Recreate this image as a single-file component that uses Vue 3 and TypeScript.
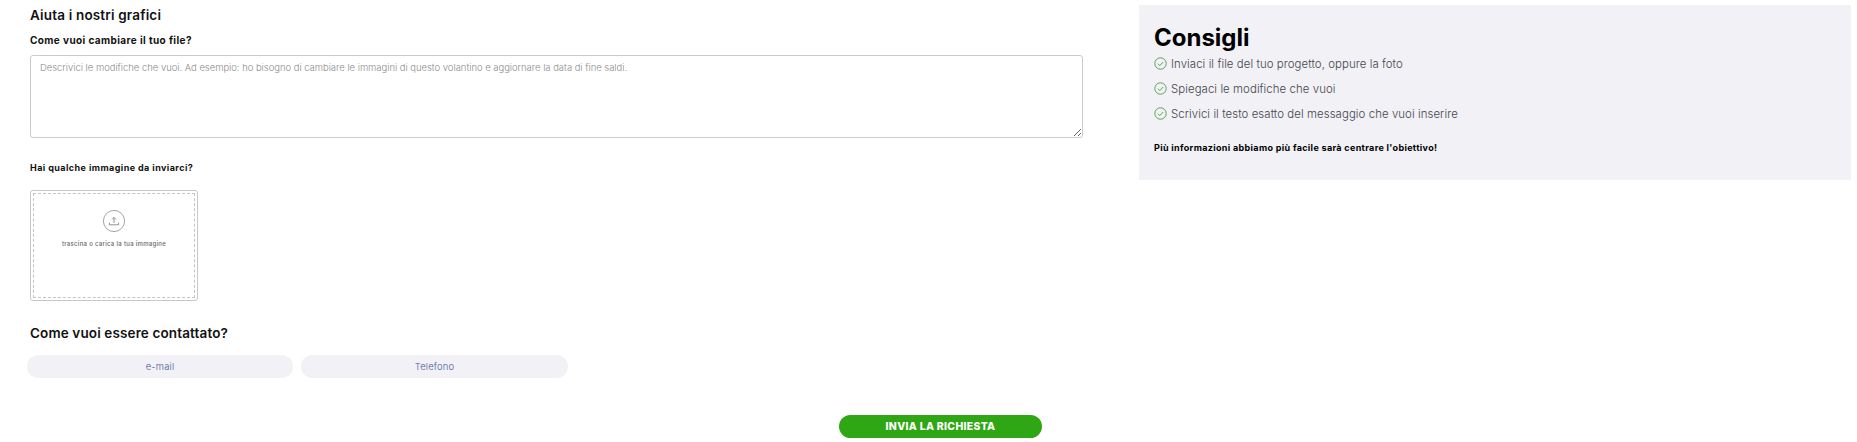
<template>
  <div class="page">
    <main class="form">
      <h2 class="title">Aiuta i nostri grafici</h2>
      <label class="label first-label" for="changes">Come vuoi cambiare il tuo file?</label>
      <textarea
        id="changes"
        class="area"
        placeholder="Descrivici le modifiche che vuoi. Ad esempio: ho bisogno di cambiare le immagini di questo volantino e aggiornare la data di fine saldi."
      ></textarea>

      <p class="label upload-label">Hai qualche immagine da inviarci?</p>
      <div class="drop">
        <div class="drop-inner">
          <svg class="upload-icon" width="24" height="24" viewBox="0 0 24 24" fill="none">
            <circle cx="12" cy="12" r="10.6" stroke="#8d8d8d" stroke-width="0.8" />
            <path d="M12 14V8.6M10 10.4l2-2 2 2" stroke="#777" stroke-width="0.8" />
            <path d="M7.4 13.6v2.2h9.2v-2.2" stroke="#777" stroke-width="0.8" />
          </svg>
          <span class="drop-text">trascina o carica la tua immagine</span>
        </div>
      </div>

      <h3 class="subtitle">Come vuoi essere contattato?</h3>
      <div class="choices">
        <button v-for="c in contacts" :key="c" class="choice" type="button">{{ c }}</button>
      </div>

      <div class="submit-row">
        <button class="submit" type="button">INVIA LA RICHIESTA</button>
      </div>
    </main>

    <aside class="tips">
      <h2 class="tips-title">Consigli</h2>
      <ul class="tips-list">
        <li v-for="t in tips" :key="t" class="tip">
          <svg width="13" height="13" viewBox="0 0 13 13" fill="none">
            <circle cx="6.5" cy="6.5" r="5.7" stroke="#4d9a45" stroke-width="0.9" />
            <path d="M3.9 6.7l1.9 1.9 3.4-3.6" stroke="#4d9a45" stroke-width="0.9" />
          </svg>
          <span>{{ t }}</span>
        </li>
      </ul>
      <p class="tips-note">Più informazioni abbiamo più facile sarà centrare l'obiettivo!</p>
    </aside>
  </div>
</template>

<script setup lang="ts">
const contacts: string[] = ["e-mail", "Telefono"];
const tips: string[] = [
  "Inviaci il file del tuo progetto, oppure la foto",
  "Spiegaci le modifiche che vuoi",
  "Scrivici il testo esatto del messaggio che vuoi inserire",
];
</script>

<style>
html,
body {
  background: #fff;
}
</style>

<style scoped>
.page {
  display: grid;
  grid-template-columns: 1139px 712px;
  width: 1857px;
  height: 442px;
  overflow: hidden;
  font-family: Inter, "Noto Sans", sans-serif;
  color: #111;
}
.form {
  display: flex;
  flex-direction: column;
  align-items: flex-start;
  padding: 7px 0 0 30px;
}
.title {
  margin: 0;
  font-size: 13.5px;
  line-height: 16px;
  font-weight: 600;
  letter-spacing: 0.17px;
}
.label {
  margin: 11px 0 0;
  font-size: 9px;
  line-height: 12px;
  font-weight: 700;
}
.first-label {
  font-size: 10px;
  letter-spacing: 0.4px;
}
.area {
  display: block;
  box-sizing: border-box;
  width: 1053px;
  height: 83px;
  margin-top: 9px;
  padding: 6px 9px;
  border: 1px solid #c9c9d2;
  border-radius: 3px;
  background: #fff;
  font-family: inherit;
  font-size: 9.43px;
  font-weight: 300;
  resize: vertical;
  outline: none;
}
.area::placeholder {
  color: #8b8b8b;
  opacity: 1;
}
.upload-label {
  margin-top: 24px;
  letter-spacing: 0.42px;
}
.drop {
  box-sizing: border-box;
  width: 168px;
  height: 111px;
  margin-top: 16px;
  padding: 2px;
  border: 1px solid #c8c8c8;
  border-radius: 3px;
}
.drop-inner {
  box-sizing: border-box;
  display: flex;
  flex-direction: column;
  align-items: center;
  height: 100%;
  padding-top: 15px;
  border: 1px dashed #c4c4c4;
}
.drop-text {
  margin-top: 7px;
  font-size: 6px;
  line-height: 8px;
  font-weight: 500;
  letter-spacing: 0.3px;
  color: #666;
}
.subtitle {
  margin: 24px 0 0;
  font-size: 13.5px;
  line-height: 16px;
  font-weight: 600;
  letter-spacing: 0.13px;
}
.choices {
  display: flex;
  gap: 8px;
  margin: 14px 0 0 -3px;
}
.choice {
  width: 266px;
  height: 23px;
  padding: 0;
  border: 0;
  border-radius: 12px;
  background: #f1f1f6;
  font-family: inherit;
  font-size: 9.4px;
  font-weight: 300;
  letter-spacing: 0.2px;
  color: #47559a;
}
.choice:last-child {
  width: 267px;
}
.submit-row {
  display: flex;
  justify-content: flex-end;
  align-self: stretch;
  margin-top: 37px;
  padding-right: 97px;
}
.submit {
  width: 203px;
  height: 23px;
  padding: 0;
  border: 0;
  border-radius: 12px;
  background: #2fa613;
  font-family: inherit;
  font-size: 10.4px;
  font-weight: 800;
  letter-spacing: 0.33px;
  color: #fff;
}
.tips {
  box-sizing: border-box;
  align-self: start;
  height: 175px;
  margin-top: 5px;
  padding: 20px 15px 0;
  background: #f1f1f6;
}
.tips-title {
  margin: 0;
  font-size: 24px;
  line-height: 26px;
  font-weight: 700;
  color: #000;
}
.tips-list {
  margin: 0;
  padding: 0;
  list-style: none;
}
.tip {
  display: flex;
  align-items: center;
  gap: 4px;
  height: 25px;
  font-size: 11.4px;
  font-weight: 300;
  letter-spacing: 0.08px;
  color: #45454c;
}
.tips-note {
  margin: 16px 0 0;
  font-size: 9px;
  line-height: 12px;
  font-weight: 700;
  letter-spacing: 0.33px;
  color: #000;
}
</style>
